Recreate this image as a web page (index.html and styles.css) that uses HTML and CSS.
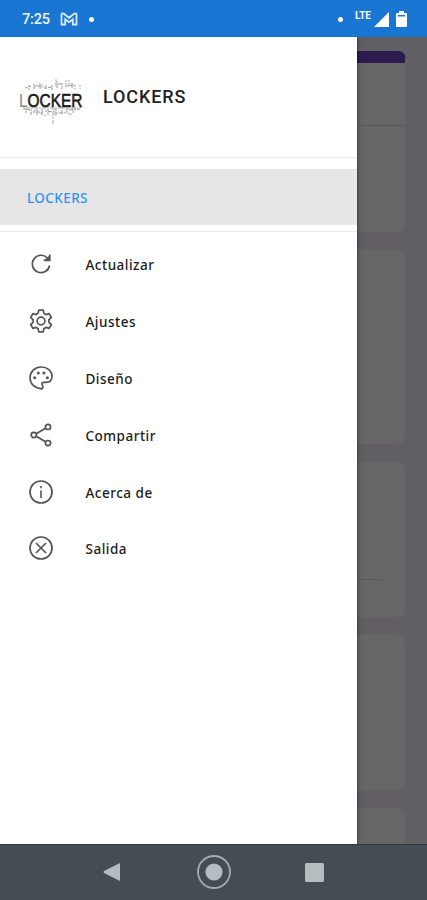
FILE: index.html
```html
<!DOCTYPE html>
<html lang="es">
	<head>
		<meta charset="UTF-8">
		<title>LOCKERS</title>
		<link rel="stylesheet" href="styles.css">
	</head>
	<body>
		<div class="phone">
			<header class="status">
				<span class="time">7:25</span>
				<svg class="mail" width="18" height="14" viewBox="0 0 18 14"><path d="M1.5 12.5V3Q1.5 .8 3.6 1.6L9 5.8l5.4-4.2q2.1-.8 2.1 1.4v9.5h-3.7V7.3L9 10.2 5.2 7.3v5.2z"/></svg>
				<i class="dot"></i>
				<i class="dot dot-right"></i>
				<span class="lte">LTE</span>
				<svg class="signal" width="15" height="15" viewBox="0 0 15 15"><path d="M15 0v15H0z"/></svg>
				<svg class="battery" width="11" height="16" viewBox="0 0 11 16"><path fill-rule="evenodd" d="M3 0h5v2h2q1 0 1 1v12q0 1-1 1H1q-1 0-1-1V3q0-1 1-1h2zM2 4v1.5h7V4z"/></svg>
			</header>

			<main class="screen">
				<!-- formulario de fondo -->
				<div class="form">
					<div class="card card-title"><div class="card-line"></div></div>
					<div class="card card-big"></div>
					<div class="card card-mid"><div class="input-line"></div></div>
					<div class="card card-mid"></div>
					<div class="card card-last"></div>
				</div>

				<!-- menu lateral -->
				<nav class="drawer">
					<div class="drawer-head">
						<svg class="logo" width="68" height="48" viewBox="0 0 68 48">
							<g class="logo-noise">
								<path d="M7 10l6-2m3 1l9-2m2 3l7-1m3-3h8m4 2l7-1M11 7v5m5-6v5m6-6v6m6-4v4m6-4v5m5-9v7m5-5v6m4-9v8m6-5v5m3-3v4"/>
								<path d="M5 31l8 1m2 2h11m1-1l9 1m2 1h9m1-3l14-1M8 30v5m5-4v6m6-6v6m5-6v5m6-5v6m7-7v7m7-8v8m5-7v4m6-5v6"/>
							</g>
							<path class="logo-soft" d="M5 30h58M35 31v15m3-15v7M38 1v7m13-6v7M62 7v4M18 7l9 3m-8 24l9 4m-16-3l7-3m28 2l7 3"/>
							<text class="logo-text" x="1" y="28.5" textLength="63.5" lengthAdjust="spacingAndGlyphs"><tspan class="logo-l">L</tspan>OCKER</text>
						</svg>
						<h1>LOCKERS</h1>
					</div>
					<div class="section">LOCKERS</div>
					<ul class="menu">
						<li>
							<svg class="icon" viewBox="0 0 24 24"><path d="M20.6 13.5A8.7 8.7 0 1 1 18.4 6l2 2"/><path d="M14.8 8.4h6V2.6"/><path class="fill" d="M15 8.4l5.8-5.4v5.4z"/></svg>
							<span>Actualizar</span>
						</li>
						<li>
							<svg class="icon" viewBox="0 0 24 24"><path d="M9.8 1.2h4.4l.8 3.2 2 1.2 3.1-1 2.2 3.9-2.4 2.2v2.6l2.4 2.2-2.2 3.9-3.1-1-2 1.2-.8 3.2H9.8L9 19.6l-2-1.2-3.1 1-2.2-3.9 2.4-2.2v-2.6L1.7 8.5l2.2-3.9 3.1 1 2-1.2z"/><circle cx="12" cy="12" r="3.9"/></svg>
							<span>Ajustes</span>
						</li>
						<li>
							<svg class="icon" viewBox="0 0 24 24"><path d="M12.8 22.8C5.8 22.3 1 17.8 1 11.8 1 5.6 6 1 12.2 1 18.4 1 23 5 23 10.2c0 4-2.7 6.2-6.4 6.2h-2.2c-1.5 0-1.9 1.1-1.2 2.2.9 1.4 1 3-.4 4.2z"/><g class="fill"><circle cx="5.7" cy="11.7" r="1.5"/><circle cx="9.3" cy="7" r="1.5"/><circle cx="14.9" cy="7" r="1.5"/><circle cx="18.4" cy="11.7" r="1.5"/></g></svg>
							<span>Diseño</span>
						</li>
						<li>
							<svg class="icon" viewBox="0 0 24 24"><path d="M7.2 10.7l9.4-5.5M7.2 13.3l9.4 5.5"/><circle cx="4.8" cy="12" r="2.6"/><circle cx="19" cy="3.9" r="2.6"/><circle cx="19" cy="20.1" r="2.6"/></svg>
							<span>Compartir</span>
						</li>
						<li>
							<svg class="icon" viewBox="0 0 24 24"><circle cx="12" cy="12" r="11"/><path class="info" d="M12 10.5v7.5M12 6v2.2"/></svg>
							<span>Acerca de</span>
						</li>
						<li>
							<svg class="icon" viewBox="0 0 24 24"><circle cx="12" cy="12" r="11"/><path d="M7 7l10 10M17 7L7 17"/></svg>
							<span>Salida</span>
						</li>
					</ul>
				</nav>
			</main>

			<footer class="navbar">
				<svg width="17" height="20" viewBox="0 0 17 20"><path d="M17 1v18L1 11q-1-1 0-2z"/></svg>
				<svg width="34" height="34" viewBox="0 0 34 34"><circle class="ring" cx="17" cy="17" r="16"/><circle cx="17" cy="17" r="8.6"/></svg>
				<svg width="19" height="19" viewBox="0 0 19 19"><rect width="19" height="19" rx="1.5"/></svg>
			</footer>
		</div>
	</body>
</html>
```

FILE: styles.css
```css
*{
	margin: 0;
	padding: 0;
	box-sizing: border-box;
}
body{
	font-family: "Noto Sans", sans-serif;
}
.phone{
	display: flex;
	flex-direction: column;
	width: 427px;
	height: 900px;
	overflow: hidden;
}
/* barra de estado */
.status{
	display: flex;
	align-items: center;
	height: 37px;
	padding: 1px 20px 0 22px;
	background: #1976d2;
	color: #eef6ff;
	fill: #fff;
}
.time{
	width: 38px;
	font: 500 14.5px Roboto, sans-serif;
	letter-spacing: -0.2px;
}
.mail{
	fill: none;
	stroke: #d9eafb;
	stroke-width: 1.8;
}
.dot{
	width: 5px;
	height: 5px;
	margin-left: 11px;
	border-radius: 50%;
	background: #fff;
}
.dot-right{
	margin-left: auto;
}
.lte{
	margin: -7px 3px 0 12px;
	font: bold 10px Roboto, sans-serif;
}
.battery{
	margin-left: 7px;
}
/* contenido */
.screen{
	position: relative;
	flex: 1;
	overflow: hidden;
	background: #625f64;
}
.form{
	display: flex;
	flex-direction: column;
	gap: 16px;
	padding: 14px 21px 0;
}
.card{
	flex: none;
	border: 1px solid #605f61;
	border-radius: 8px;
	background: #666;
}
.card-title{
	height: 182px;
	border-top: 12px solid #2b1b4e;
}
.card-line{
	height: 63px;
	border-bottom: 1px solid #585858;
}
.card-big{
	height: 196px;
}
.card-mid{
	height: 157px;
}
.card-last{
	height: 100px;
}
.input-line{
	width: 360px;
	height: 118px;
	border-bottom: 1px solid #5a5a5a;
}
.drawer{
	position: absolute;
	top: 0;
	left: 0;
	width: 357px;
	height: 100%;
	background: #fff;
	box-shadow: 0 0 4px rgba(0,0,0,.6);
}
.drawer-head{
	display: flex;
	align-items: center;
	height: 121px;
	padding: 0 18px 0;
	border-bottom: 1px solid #ececec;
}
.drawer-head h1{
	margin: 0 0 1px 17px;
	font: 500 18px Roboto, sans-serif;
	letter-spacing: 0.9px;
	color: #222;
}
.logo{
	margin-top: 10px;
	overflow: visible;
}
.logo-noise,
.logo-soft{
	fill: none;
	stroke: #999;
	stroke-width: 1;
	stroke-dasharray: 2 1 4 1;
}
.logo-soft{
	stroke: #c4c4c4;
	stroke-width: 1.4;
}
.logo-text{
	font: 500 18px "Liberation Sans", sans-serif;
	fill: #1a1a1a;
	stroke: #1a1a1a;
	stroke-width: .6;
}
.logo-l{
	fill: #888;
	stroke: none;
}
.section{
	height: 56px;
	margin-top: 11px;
	padding-left: 27px;
	background: #e6e6e6;
	font-size: 13.5px;
	font-weight: 500;
	letter-spacing: 0.4px;
	line-height: 58px;
	color: #2b95ee;
}
.menu{
	margin-top: 6px;
	border-top: 1px solid #ececec;
	padding-top: 4px;
	list-style: none;
}
.menu li{
	display: flex;
	align-items: center;
	height: 56.8px;
	padding-left: 28.5px;
	font-size: 13.5px;
	font-weight: 500;
	letter-spacing: 0.5px;
	color: #1c1c1c;
}
.menu span{
	margin-top: 2px;
}
.icon{
	width: 24px;
	height: 24px;
	margin-right: 33px;
	fill: none;
	stroke: #555;
	stroke-width: 1.7;
	stroke-linejoin: round;
}
.icon .fill{
	fill: #555;
	stroke: none;
}
.icon .info{
	stroke: #777;
	stroke-width: 2;
}
/* botones de android */
.navbar{
	display: flex;
	align-items: center;
	height: 56px;
	padding: 0 0 1px 103px;
	border-top: 1px solid #2c393d;
	background: #454d54;
	fill: #b5bdc1;
}
.navbar svg + svg{
	margin-left: 77px;
}
.navbar svg + svg + svg{
	margin-left: 74px;
}
.ring{
	fill: none;
	stroke: #a5adb1;
	stroke-width: 1.8;
}
```
